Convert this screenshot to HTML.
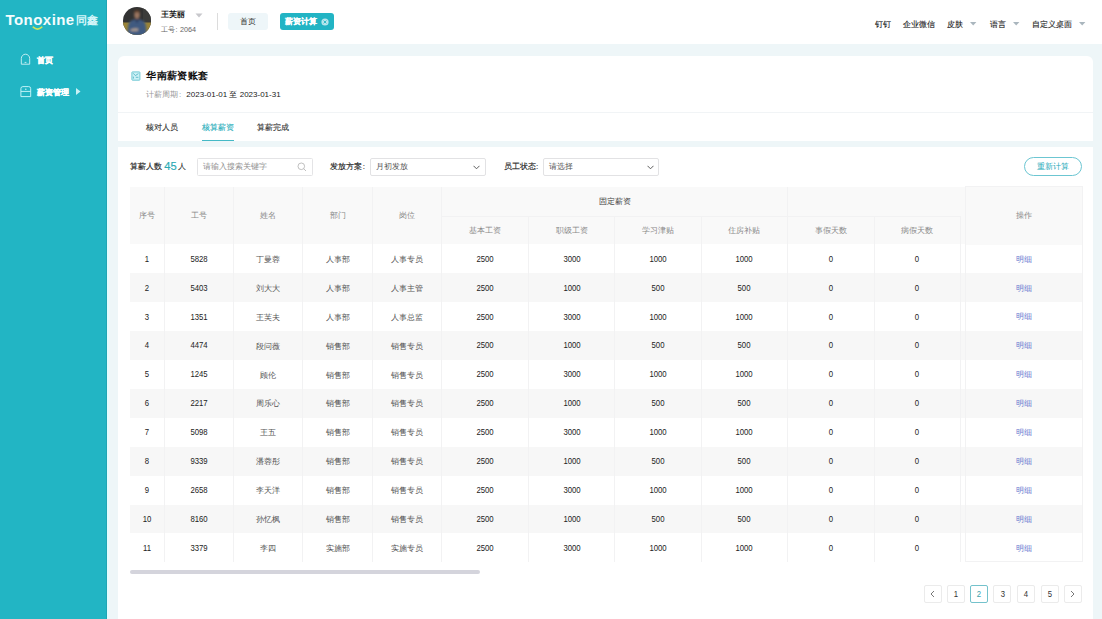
<!DOCTYPE html>
<html><head><meta charset="utf-8"><style>
*{box-sizing:border-box;margin:0;padding:0}
html,body{width:1102px;height:619px;overflow:hidden;background:#eef6f8;font-family:"Liberation Sans",sans-serif;color:#333}
.t{position:absolute;white-space:nowrap;line-height:1}
.b{position:absolute}
.c{position:absolute;white-space:nowrap;line-height:1;transform:translateX(-50%)}
.cell{font-size:8px;color:#333}
.hd{font-size:8px;color:#888}
</style></head><body>
<div class="b" style="left:0;top:0;width:107px;height:619px;background:#22b5c4"></div>
<div class="b" style="left:106px;top:0;width:1px;height:619px;background:#1fa6b4"></div>
<div class="b" style="left:107px;top:44px;width:1.5px;height:575px;background:#e2fcfe"></div>
<div class="t" style="left:5.5px;top:12.3px;font-size:15px;color:#f4fdfe;font-weight:bold;letter-spacing:0.45px">Tonoxine</div>
<div class="t" style="left:75.8px;top:14.5px;font-size:11.4px;color:#d4f5f9;font-weight:bold">同鑫</div>
<svg class="b" style="left:32px;top:26px" width="11" height="5" viewBox="0 0 11 5"><path d="M1.2 1.2 Q5.5 5 9.8 1.2" fill="none" stroke="#cde35a" stroke-width="1.6" stroke-linecap="round"/></svg>
<svg class="b" style="left:20px;top:53px" width="12" height="13" viewBox="0 0 12 13"><path d="M1.3 11.2 V5.6 A4.2 4.4 0 0 1 9.7 5.6 V11.2 Z" fill="none" stroke="#d2f3f6" stroke-width="0.9"/><path d="M4.6 9.4 H6.4" stroke="#d2f3f6" stroke-width="0.9"/></svg>
<div class="t" style="left:37px;top:56.8px;font-size:8.2px;color:#fff;font-weight:900;-webkit-text-stroke:0.3px #fff">首页</div>
<svg class="b" style="left:20px;top:85px" width="12" height="13" viewBox="0 0 12 13"><path d="M0.9 11.6 V3.6 Q0.9 1.6 2.9 1.6 H8.7 Q10.7 1.6 10.7 3.6 V11.6 Z" fill="none" stroke="#c8f6fa" stroke-width="0.95"/><path d="M0.9 6.4 H10.7" stroke="#c8f6fa" stroke-width="0.95" fill="none"/><circle cx="5.8" cy="4.3" r="0.75" fill="#c8f6fa"/></svg>
<div class="t" style="left:37px;top:88.6px;font-size:8.2px;color:#fff;font-weight:900;-webkit-text-stroke:0.3px #fff">薪资管理</div>
<svg class="b" style="left:76px;top:88px" width="5" height="7" viewBox="0 0 5 7"><path d="M0 0 L4.5 3.5 L0 7 Z" fill="#c9f1f5"/></svg>
<div class="b" style="left:107px;top:0;width:995px;height:44.4px;background:#fff"></div>
<svg class="b" style="left:123px;top:7px" width="28" height="28" viewBox="0 0 28 28"><defs><clipPath id="av"><circle cx="14" cy="14" r="14"/></clipPath><filter id="bl2" x="-50%" y="-50%" width="200%" height="200%"><feGaussianBlur stdDeviation="0.8"/></filter></defs><g clip-path="url(#av)"><rect width="28" height="28" fill="#323232"/><rect x="20" y="0" width="8" height="16" fill="#3c3c3a"/><rect x="0" y="15.5" width="28" height="12.5" fill="#9a8438"/><g filter="url(#bl2)"><path d="M4 29 L5.5 17 Q7 12.5 14 12 Q21 12.5 22.5 17 L24 29 Z" fill="#3f5a80"/><path d="M11 12 L14 16 L17 12 Z" fill="#2e4060"/><ellipse cx="14" cy="8" rx="2.8" ry="3.8" fill="#9a7560"/><path d="M10.8 6 Q11 2.8 14 2.8 Q17 2.8 17.2 6 Q14 4.5 10.8 6 Z" fill="#5a3e2c"/><path d="M7.5 22.5 Q11 20.5 15.5 21.5 L15 24 Q10.5 24.5 7.5 24 Z" fill="#a89a90"/><rect x="0" y="25" width="4" height="3" fill="#2a2a2a"/></g></g></svg>
<div class="t" style="left:161px;top:11.3px;font-size:8px;color:#1a1a1a;font-weight:bold">王芙丽</div>
<svg class="b" style="left:195px;top:13px" width="8" height="5" viewBox="0 0 8 5"><path d="M0.5 0.5 L7.5 0.5 L4 4.5 Z" fill="#c8c8cc"/></svg>
<div class="t" style="left:161px;top:25.5px;font-size:7.2px;color:#666">工号<span style="margin:0 2.5px 0 0.5px">:</span>2064</div>
<div class="b" style="left:217px;top:13px;width:1px;height:17px;background:#dcdcdc"></div>
<div class="b" style="left:228px;top:13px;width:40px;height:17px;background:#eef6f9;border-radius:3px"></div>
<div class="c" style="left:248px;top:17.9px;font-size:8px;color:#333">首页</div>
<div class="b" style="left:279.5px;top:13px;width:54.5px;height:17px;background:#22b4c4;border-radius:3px"></div>
<div class="t" style="left:285.3px;top:17.8px;font-size:8px;color:#fff;font-weight:bold;-webkit-text-stroke:0.15px #fff">薪资计算</div>
<svg class="b" style="left:320.8px;top:17.6px" width="8" height="8" viewBox="0 0 8 8"><circle cx="4" cy="4" r="3.6" fill="#b8e6ec"/><path d="M2.6 2.6 L5.4 5.4 M5.4 2.6 L2.6 5.4" stroke="#22b4c4" stroke-width="0.9"/></svg>
<div class="t" style="left:875.4px;top:21px;font-size:8px;color:#222;-webkit-text-stroke:0.12px currentColor">钉钉</div>
<div class="t" style="left:903.3px;top:21px;font-size:8px;color:#222;-webkit-text-stroke:0.12px currentColor">企业微信</div>
<div class="t" style="left:947.2px;top:21px;font-size:8px;color:#222;-webkit-text-stroke:0.12px currentColor">皮肤</div>
<svg class="b" style="left:969.6999999999999px;top:22.4px" width="7" height="4" viewBox="0 0 7 4"><path d="M0 0 L6.4 0 L3.2 3.6 Z" fill="#aab6be"/></svg>
<div class="t" style="left:989.6px;top:21px;font-size:8px;color:#222;-webkit-text-stroke:0.12px currentColor">语言</div>
<svg class="b" style="left:1012.6999999999999px;top:22.4px" width="7" height="4" viewBox="0 0 7 4"><path d="M0 0 L6.4 0 L3.2 3.6 Z" fill="#aab6be"/></svg>
<div class="t" style="left:1032.4px;top:21px;font-size:8px;color:#222;-webkit-text-stroke:0.12px currentColor">自定义桌面</div>
<svg class="b" style="left:1079.3px;top:22.4px" width="7" height="4" viewBox="0 0 7 4"><path d="M0 0 L6.4 0 L3.2 3.6 Z" fill="#aab6be"/></svg>
<div class="b" style="left:118px;top:56.2px;width:975px;height:84.6px;background:#fff;border-radius:6px 6px 0 0"></div>
<svg class="b" style="left:130.5px;top:70.5px" width="10" height="10" viewBox="0 0 10 10"><rect x="0.9" y="0.9" width="8" height="8.3" rx="0.6" fill="#cdf1f6" stroke="#6ac6d3" stroke-width="0.95"/><path d="M2.2 2.3 L4.4 4.6 L7.4 2.6 M2.4 5.6 V7.6 M4.8 6.3 H7.4" fill="none" stroke="#4fb3c3" stroke-width="0.85"/></svg>
<div class="t" style="left:146.3px;top:71px;font-size:10.45px;letter-spacing:0.35px;color:#111;font-weight:bold">华南薪资账套</div>
<div class="t" style="left:146.3px;top:90.5px;font-size:8px;color:#999">计薪周期<span style="margin:0 5px 0 0.8px">:</span><span style="color:#222;font-size:8px">2023-01-01 至 2023-01-31</span></div>
<div class="b" style="left:118px;top:111.5px;width:975px;height:1px;background:#f1f4f6"></div>
<div class="t" style="left:146.3px;top:124px;font-size:8px;color:#333;-webkit-text-stroke:0.12px currentColor">核对人员</div>
<div class="t" style="left:201.6px;top:124px;font-size:8px;color:#2aaebb;-webkit-text-stroke:0.12px currentColor">核算薪资</div>
<div class="b" style="left:201.6px;top:139.7px;width:32.4px;height:1.4px;background:#45b9c6"></div>
<div class="t" style="left:257.4px;top:124px;font-size:8px;color:#333;-webkit-text-stroke:0.12px currentColor">算薪完成</div>
<div class="b" style="left:118px;top:147px;width:975px;height:480px;background:#fff"></div>
<div class="t" style="left:130.4px;top:163.2px;font-size:8px;color:#222;-webkit-text-stroke:0.14px currentColor">算薪人数</div>
<div class="t" style="left:164.2px;top:161.2px;font-size:11.2px;color:#2aaab4;-webkit-text-stroke:0.15px currentColor">45</div>
<div class="t" style="left:178px;top:163.2px;font-size:8px;color:#222">人</div>
<div class="b" style="left:197.2px;top:158.3px;width:115.8px;height:17.5px;border:1px solid #e4e4e6;border-radius:1.5px"></div>
<div class="t" style="left:203px;top:162.8px;font-size:8px;color:#8f8f8f">请输入搜索关键字</div>
<svg class="b" style="left:297px;top:161.5px" width="10" height="10" viewBox="0 0 10 10"><circle cx="4.3" cy="4.3" r="3.3" fill="none" stroke="#b0b0b0" stroke-width="0.8"/><path d="M6.7 6.7 L9 9" stroke="#b0b0b0" stroke-width="0.8"/></svg>
<div class="t" style="left:330.2px;top:163.2px;font-size:8px;color:#222;-webkit-text-stroke:0.14px currentColor">发放方案<span style="margin-left:0.5px">:</span></div>
<div class="b" style="left:370.2px;top:158.3px;width:115.6px;height:17.5px;border:1px solid #e2e2e4;border-radius:2px"></div>
<div class="t" style="left:375.6px;top:162.8px;font-size:8px;color:#555">月初发放</div>
<svg class="b" style="left:472.5px;top:164.8px" width="7" height="5" viewBox="0 0 7 5"><path d="M0.5 0.8 L3.5 3.8 L6.5 0.8" fill="none" stroke="#555" stroke-width="0.95"/></svg>
<div class="t" style="left:503.5px;top:163.2px;font-size:8px;color:#222;-webkit-text-stroke:0.14px currentColor">员工状态<span style="margin-left:0.5px">:</span></div>
<div class="b" style="left:543.2px;top:158.3px;width:115.6px;height:17.5px;border:1px solid #e2e2e4;border-radius:2px"></div>
<div class="t" style="left:549.3px;top:162.8px;font-size:8px;color:#555">请选择</div>
<svg class="b" style="left:646.5px;top:164.8px" width="7" height="5" viewBox="0 0 7 5"><path d="M0.5 0.8 L3.5 3.8 L6.5 0.8" fill="none" stroke="#555" stroke-width="0.95"/></svg>
<div class="b" style="left:1024px;top:157px;width:58px;height:19px;border:1px solid #6cc6d2;border-radius:10px"></div>
<div class="c" style="left:1053px;top:162.5px;font-size:8px;color:#22a8b8">重新计算</div>
<div class="b" style="left:130px;top:186.8px;width:952.5999999999999px;height:57.69999999999999px;background:#f9f9f9"></div>
<div class="b" style="left:130px;top:245.2px;width:952.5999999999999px;height:28.19px;background:#fff"></div>
<div class="b" style="left:130px;top:273.39px;width:952.5999999999999px;height:28.89px;background:#f7f7f7"></div>
<div class="b" style="left:130px;top:302.28px;width:952.5999999999999px;height:28.89px;background:#fff"></div>
<div class="b" style="left:130px;top:331.17px;width:952.5999999999999px;height:28.89px;background:#f7f7f7"></div>
<div class="b" style="left:130px;top:360.06px;width:952.5999999999999px;height:28.89px;background:#fff"></div>
<div class="b" style="left:130px;top:388.95px;width:952.5999999999999px;height:28.89px;background:#f7f7f7"></div>
<div class="b" style="left:130px;top:417.84000000000003px;width:952.5999999999999px;height:28.89px;background:#fff"></div>
<div class="b" style="left:130px;top:446.73px;width:952.5999999999999px;height:28.89px;background:#f7f7f7"></div>
<div class="b" style="left:130px;top:475.62px;width:952.5999999999999px;height:28.89px;background:#fff"></div>
<div class="b" style="left:130px;top:504.51px;width:952.5999999999999px;height:28.89px;background:#f7f7f7"></div>
<div class="b" style="left:130px;top:533.4px;width:952.5999999999999px;height:28.600000000000023px;background:#fff"></div>
<div class="b" style="left:164.2px;top:186.8px;width:1px;height:375.2px;background:#f2f2f3"></div>
<div class="b" style="left:233.1px;top:186.8px;width:1px;height:375.2px;background:#f2f2f3"></div>
<div class="b" style="left:302.2px;top:186.8px;width:1px;height:375.2px;background:#f2f2f3"></div>
<div class="b" style="left:372.0px;top:186.8px;width:1px;height:375.2px;background:#f2f2f3"></div>
<div class="b" style="left:441.2px;top:186.8px;width:1px;height:375.2px;background:#f2f2f3"></div>
<div class="b" style="left:527.9px;top:216.3px;width:1px;height:345.7px;background:#f2f2f3"></div>
<div class="b" style="left:614.3px;top:216.3px;width:1px;height:345.7px;background:#f2f2f3"></div>
<div class="b" style="left:701.0px;top:216.3px;width:1px;height:345.7px;background:#f2f2f3"></div>
<div class="b" style="left:786.8px;top:186.8px;width:1px;height:375.2px;background:#f2f2f3"></div>
<div class="b" style="left:873.7px;top:216.3px;width:1px;height:345.7px;background:#f2f2f3"></div>
<div class="b" style="left:960.2px;top:216.3px;width:1px;height:345.7px;background:#f2f2f3"></div>
<div class="b" style="left:441.7px;top:215.8px;width:519.0px;height:1px;background:#f2f2f3"></div>
<div class="c hd" style="left:147.35px;top:211.65px">序号</div>
<div class="c hd" style="left:199.14999999999998px;top:211.65px">工号</div>
<div class="c hd" style="left:268.15px;top:211.65px">姓名</div>
<div class="c hd" style="left:337.6px;top:211.65px">部门</div>
<div class="c hd" style="left:407.1px;top:211.65px">岗位</div>
<div class="c hd" style="left:614.5px;top:197.55px;color:#3a3a3a">固定薪资</div>
<div class="c hd" style="left:485.04999999999995px;top:227.20000000000002px">基本工资</div>
<div class="c hd" style="left:571.5999999999999px;top:227.20000000000002px">职级工资</div>
<div class="c hd" style="left:658.15px;top:227.20000000000002px">学习津贴</div>
<div class="c hd" style="left:744.4px;top:227.20000000000002px">住房补贴</div>
<div class="c hd" style="left:830.75px;top:227.20000000000002px">事假天数</div>
<div class="c hd" style="left:917.45px;top:227.20000000000002px">病假天数</div>
<div class="c cell" style="left:147.35px;top:254.745px;color:#222;font-size:8.8px;transform:translateX(-50%) scaleX(0.88)">1</div>
<div class="c cell" style="left:199.14999999999998px;top:254.745px;color:#222;font-size:8.8px;transform:translateX(-50%) scaleX(0.88)">5828</div>
<div class="c cell" style="left:268.15px;top:255.945px;color:#555">丁曼蓉</div>
<div class="c cell" style="left:337.6px;top:255.945px;color:#555">人事部</div>
<div class="c cell" style="left:407.1px;top:255.945px;color:#555">人事专员</div>
<div class="c cell" style="left:485.04999999999995px;top:254.745px;color:#222;font-size:8.8px;transform:translateX(-50%) scaleX(0.88)">2500</div>
<div class="c cell" style="left:571.5999999999999px;top:254.745px;color:#222;font-size:8.8px;transform:translateX(-50%) scaleX(0.88)">3000</div>
<div class="c cell" style="left:658.15px;top:254.745px;color:#222;font-size:8.8px;transform:translateX(-50%) scaleX(0.88)">1000</div>
<div class="c cell" style="left:744.4px;top:254.745px;color:#222;font-size:8.8px;transform:translateX(-50%) scaleX(0.88)">1000</div>
<div class="c cell" style="left:830.75px;top:254.745px;color:#222;font-size:8.8px;transform:translateX(-50%) scaleX(0.88)">0</div>
<div class="c cell" style="left:917.45px;top:254.745px;color:#222;font-size:8.8px;transform:translateX(-50%) scaleX(0.88)">0</div>
<div class="c cell" style="left:147.35px;top:283.63499999999993px;color:#222;font-size:8.8px;transform:translateX(-50%) scaleX(0.88)">2</div>
<div class="c cell" style="left:199.14999999999998px;top:283.63499999999993px;color:#222;font-size:8.8px;transform:translateX(-50%) scaleX(0.88)">5403</div>
<div class="c cell" style="left:268.15px;top:284.835px;color:#555">刘大大</div>
<div class="c cell" style="left:337.6px;top:284.835px;color:#555">人事部</div>
<div class="c cell" style="left:407.1px;top:284.835px;color:#555">人事主管</div>
<div class="c cell" style="left:485.04999999999995px;top:283.63499999999993px;color:#222;font-size:8.8px;transform:translateX(-50%) scaleX(0.88)">2500</div>
<div class="c cell" style="left:571.5999999999999px;top:283.63499999999993px;color:#222;font-size:8.8px;transform:translateX(-50%) scaleX(0.88)">1000</div>
<div class="c cell" style="left:658.15px;top:283.63499999999993px;color:#222;font-size:8.8px;transform:translateX(-50%) scaleX(0.88)">500</div>
<div class="c cell" style="left:744.4px;top:283.63499999999993px;color:#222;font-size:8.8px;transform:translateX(-50%) scaleX(0.88)">500</div>
<div class="c cell" style="left:830.75px;top:283.63499999999993px;color:#222;font-size:8.8px;transform:translateX(-50%) scaleX(0.88)">0</div>
<div class="c cell" style="left:917.45px;top:283.63499999999993px;color:#222;font-size:8.8px;transform:translateX(-50%) scaleX(0.88)">0</div>
<div class="c cell" style="left:147.35px;top:312.5249999999999px;color:#222;font-size:8.8px;transform:translateX(-50%) scaleX(0.88)">3</div>
<div class="c cell" style="left:199.14999999999998px;top:312.5249999999999px;color:#222;font-size:8.8px;transform:translateX(-50%) scaleX(0.88)">1351</div>
<div class="c cell" style="left:268.15px;top:313.72499999999997px;color:#555">王芙夫</div>
<div class="c cell" style="left:337.6px;top:313.72499999999997px;color:#555">人事部</div>
<div class="c cell" style="left:407.1px;top:313.72499999999997px;color:#555">人事总监</div>
<div class="c cell" style="left:485.04999999999995px;top:312.5249999999999px;color:#222;font-size:8.8px;transform:translateX(-50%) scaleX(0.88)">2500</div>
<div class="c cell" style="left:571.5999999999999px;top:312.5249999999999px;color:#222;font-size:8.8px;transform:translateX(-50%) scaleX(0.88)">3000</div>
<div class="c cell" style="left:658.15px;top:312.5249999999999px;color:#222;font-size:8.8px;transform:translateX(-50%) scaleX(0.88)">1000</div>
<div class="c cell" style="left:744.4px;top:312.5249999999999px;color:#222;font-size:8.8px;transform:translateX(-50%) scaleX(0.88)">1000</div>
<div class="c cell" style="left:830.75px;top:312.5249999999999px;color:#222;font-size:8.8px;transform:translateX(-50%) scaleX(0.88)">0</div>
<div class="c cell" style="left:917.45px;top:312.5249999999999px;color:#222;font-size:8.8px;transform:translateX(-50%) scaleX(0.88)">0</div>
<div class="c cell" style="left:147.35px;top:341.41499999999996px;color:#222;font-size:8.8px;transform:translateX(-50%) scaleX(0.88)">4</div>
<div class="c cell" style="left:199.14999999999998px;top:341.41499999999996px;color:#222;font-size:8.8px;transform:translateX(-50%) scaleX(0.88)">4474</div>
<div class="c cell" style="left:268.15px;top:342.615px;color:#555">段问薇</div>
<div class="c cell" style="left:337.6px;top:342.615px;color:#555">销售部</div>
<div class="c cell" style="left:407.1px;top:342.615px;color:#555">销售专员</div>
<div class="c cell" style="left:485.04999999999995px;top:341.41499999999996px;color:#222;font-size:8.8px;transform:translateX(-50%) scaleX(0.88)">2500</div>
<div class="c cell" style="left:571.5999999999999px;top:341.41499999999996px;color:#222;font-size:8.8px;transform:translateX(-50%) scaleX(0.88)">1000</div>
<div class="c cell" style="left:658.15px;top:341.41499999999996px;color:#222;font-size:8.8px;transform:translateX(-50%) scaleX(0.88)">500</div>
<div class="c cell" style="left:744.4px;top:341.41499999999996px;color:#222;font-size:8.8px;transform:translateX(-50%) scaleX(0.88)">500</div>
<div class="c cell" style="left:830.75px;top:341.41499999999996px;color:#222;font-size:8.8px;transform:translateX(-50%) scaleX(0.88)">0</div>
<div class="c cell" style="left:917.45px;top:341.41499999999996px;color:#222;font-size:8.8px;transform:translateX(-50%) scaleX(0.88)">0</div>
<div class="c cell" style="left:147.35px;top:370.30499999999995px;color:#222;font-size:8.8px;transform:translateX(-50%) scaleX(0.88)">5</div>
<div class="c cell" style="left:199.14999999999998px;top:370.30499999999995px;color:#222;font-size:8.8px;transform:translateX(-50%) scaleX(0.88)">1245</div>
<div class="c cell" style="left:268.15px;top:371.505px;color:#555">顾伦</div>
<div class="c cell" style="left:337.6px;top:371.505px;color:#555">销售部</div>
<div class="c cell" style="left:407.1px;top:371.505px;color:#555">销售专员</div>
<div class="c cell" style="left:485.04999999999995px;top:370.30499999999995px;color:#222;font-size:8.8px;transform:translateX(-50%) scaleX(0.88)">2500</div>
<div class="c cell" style="left:571.5999999999999px;top:370.30499999999995px;color:#222;font-size:8.8px;transform:translateX(-50%) scaleX(0.88)">3000</div>
<div class="c cell" style="left:658.15px;top:370.30499999999995px;color:#222;font-size:8.8px;transform:translateX(-50%) scaleX(0.88)">1000</div>
<div class="c cell" style="left:744.4px;top:370.30499999999995px;color:#222;font-size:8.8px;transform:translateX(-50%) scaleX(0.88)">1000</div>
<div class="c cell" style="left:830.75px;top:370.30499999999995px;color:#222;font-size:8.8px;transform:translateX(-50%) scaleX(0.88)">0</div>
<div class="c cell" style="left:917.45px;top:370.30499999999995px;color:#222;font-size:8.8px;transform:translateX(-50%) scaleX(0.88)">0</div>
<div class="c cell" style="left:147.35px;top:399.19499999999994px;color:#222;font-size:8.8px;transform:translateX(-50%) scaleX(0.88)">6</div>
<div class="c cell" style="left:199.14999999999998px;top:399.19499999999994px;color:#222;font-size:8.8px;transform:translateX(-50%) scaleX(0.88)">2217</div>
<div class="c cell" style="left:268.15px;top:400.395px;color:#555">周乐心</div>
<div class="c cell" style="left:337.6px;top:400.395px;color:#555">销售部</div>
<div class="c cell" style="left:407.1px;top:400.395px;color:#555">销售专员</div>
<div class="c cell" style="left:485.04999999999995px;top:399.19499999999994px;color:#222;font-size:8.8px;transform:translateX(-50%) scaleX(0.88)">2500</div>
<div class="c cell" style="left:571.5999999999999px;top:399.19499999999994px;color:#222;font-size:8.8px;transform:translateX(-50%) scaleX(0.88)">1000</div>
<div class="c cell" style="left:658.15px;top:399.19499999999994px;color:#222;font-size:8.8px;transform:translateX(-50%) scaleX(0.88)">500</div>
<div class="c cell" style="left:744.4px;top:399.19499999999994px;color:#222;font-size:8.8px;transform:translateX(-50%) scaleX(0.88)">500</div>
<div class="c cell" style="left:830.75px;top:399.19499999999994px;color:#222;font-size:8.8px;transform:translateX(-50%) scaleX(0.88)">0</div>
<div class="c cell" style="left:917.45px;top:399.19499999999994px;color:#222;font-size:8.8px;transform:translateX(-50%) scaleX(0.88)">0</div>
<div class="c cell" style="left:147.35px;top:428.085px;color:#222;font-size:8.8px;transform:translateX(-50%) scaleX(0.88)">7</div>
<div class="c cell" style="left:199.14999999999998px;top:428.085px;color:#222;font-size:8.8px;transform:translateX(-50%) scaleX(0.88)">5098</div>
<div class="c cell" style="left:268.15px;top:429.285px;color:#555">王五</div>
<div class="c cell" style="left:337.6px;top:429.285px;color:#555">销售部</div>
<div class="c cell" style="left:407.1px;top:429.285px;color:#555">销售专员</div>
<div class="c cell" style="left:485.04999999999995px;top:428.085px;color:#222;font-size:8.8px;transform:translateX(-50%) scaleX(0.88)">2500</div>
<div class="c cell" style="left:571.5999999999999px;top:428.085px;color:#222;font-size:8.8px;transform:translateX(-50%) scaleX(0.88)">3000</div>
<div class="c cell" style="left:658.15px;top:428.085px;color:#222;font-size:8.8px;transform:translateX(-50%) scaleX(0.88)">1000</div>
<div class="c cell" style="left:744.4px;top:428.085px;color:#222;font-size:8.8px;transform:translateX(-50%) scaleX(0.88)">1000</div>
<div class="c cell" style="left:830.75px;top:428.085px;color:#222;font-size:8.8px;transform:translateX(-50%) scaleX(0.88)">0</div>
<div class="c cell" style="left:917.45px;top:428.085px;color:#222;font-size:8.8px;transform:translateX(-50%) scaleX(0.88)">0</div>
<div class="c cell" style="left:147.35px;top:456.97499999999997px;color:#222;font-size:8.8px;transform:translateX(-50%) scaleX(0.88)">8</div>
<div class="c cell" style="left:199.14999999999998px;top:456.97499999999997px;color:#222;font-size:8.8px;transform:translateX(-50%) scaleX(0.88)">9339</div>
<div class="c cell" style="left:268.15px;top:458.175px;color:#555">潘蓉彤</div>
<div class="c cell" style="left:337.6px;top:458.175px;color:#555">销售部</div>
<div class="c cell" style="left:407.1px;top:458.175px;color:#555">销售专员</div>
<div class="c cell" style="left:485.04999999999995px;top:456.97499999999997px;color:#222;font-size:8.8px;transform:translateX(-50%) scaleX(0.88)">2500</div>
<div class="c cell" style="left:571.5999999999999px;top:456.97499999999997px;color:#222;font-size:8.8px;transform:translateX(-50%) scaleX(0.88)">1000</div>
<div class="c cell" style="left:658.15px;top:456.97499999999997px;color:#222;font-size:8.8px;transform:translateX(-50%) scaleX(0.88)">500</div>
<div class="c cell" style="left:744.4px;top:456.97499999999997px;color:#222;font-size:8.8px;transform:translateX(-50%) scaleX(0.88)">500</div>
<div class="c cell" style="left:830.75px;top:456.97499999999997px;color:#222;font-size:8.8px;transform:translateX(-50%) scaleX(0.88)">0</div>
<div class="c cell" style="left:917.45px;top:456.97499999999997px;color:#222;font-size:8.8px;transform:translateX(-50%) scaleX(0.88)">0</div>
<div class="c cell" style="left:147.35px;top:485.86499999999995px;color:#222;font-size:8.8px;transform:translateX(-50%) scaleX(0.88)">9</div>
<div class="c cell" style="left:199.14999999999998px;top:485.86499999999995px;color:#222;font-size:8.8px;transform:translateX(-50%) scaleX(0.88)">2658</div>
<div class="c cell" style="left:268.15px;top:487.065px;color:#555">李天洋</div>
<div class="c cell" style="left:337.6px;top:487.065px;color:#555">销售部</div>
<div class="c cell" style="left:407.1px;top:487.065px;color:#555">销售专员</div>
<div class="c cell" style="left:485.04999999999995px;top:485.86499999999995px;color:#222;font-size:8.8px;transform:translateX(-50%) scaleX(0.88)">2500</div>
<div class="c cell" style="left:571.5999999999999px;top:485.86499999999995px;color:#222;font-size:8.8px;transform:translateX(-50%) scaleX(0.88)">3000</div>
<div class="c cell" style="left:658.15px;top:485.86499999999995px;color:#222;font-size:8.8px;transform:translateX(-50%) scaleX(0.88)">1000</div>
<div class="c cell" style="left:744.4px;top:485.86499999999995px;color:#222;font-size:8.8px;transform:translateX(-50%) scaleX(0.88)">1000</div>
<div class="c cell" style="left:830.75px;top:485.86499999999995px;color:#222;font-size:8.8px;transform:translateX(-50%) scaleX(0.88)">0</div>
<div class="c cell" style="left:917.45px;top:485.86499999999995px;color:#222;font-size:8.8px;transform:translateX(-50%) scaleX(0.88)">0</div>
<div class="c cell" style="left:147.35px;top:514.755px;color:#222;font-size:8.8px;transform:translateX(-50%) scaleX(0.88)">10</div>
<div class="c cell" style="left:199.14999999999998px;top:514.755px;color:#222;font-size:8.8px;transform:translateX(-50%) scaleX(0.88)">8160</div>
<div class="c cell" style="left:268.15px;top:515.955px;color:#555">孙忆枫</div>
<div class="c cell" style="left:337.6px;top:515.955px;color:#555">销售部</div>
<div class="c cell" style="left:407.1px;top:515.955px;color:#555">销售专员</div>
<div class="c cell" style="left:485.04999999999995px;top:514.755px;color:#222;font-size:8.8px;transform:translateX(-50%) scaleX(0.88)">2500</div>
<div class="c cell" style="left:571.5999999999999px;top:514.755px;color:#222;font-size:8.8px;transform:translateX(-50%) scaleX(0.88)">1000</div>
<div class="c cell" style="left:658.15px;top:514.755px;color:#222;font-size:8.8px;transform:translateX(-50%) scaleX(0.88)">500</div>
<div class="c cell" style="left:744.4px;top:514.755px;color:#222;font-size:8.8px;transform:translateX(-50%) scaleX(0.88)">500</div>
<div class="c cell" style="left:830.75px;top:514.755px;color:#222;font-size:8.8px;transform:translateX(-50%) scaleX(0.88)">0</div>
<div class="c cell" style="left:917.45px;top:514.755px;color:#222;font-size:8.8px;transform:translateX(-50%) scaleX(0.88)">0</div>
<div class="c cell" style="left:147.35px;top:543.645px;color:#222;font-size:8.8px;transform:translateX(-50%) scaleX(0.88)">11</div>
<div class="c cell" style="left:199.14999999999998px;top:543.645px;color:#222;font-size:8.8px;transform:translateX(-50%) scaleX(0.88)">3379</div>
<div class="c cell" style="left:268.15px;top:544.845px;color:#555">李四</div>
<div class="c cell" style="left:337.6px;top:544.845px;color:#555">实施部</div>
<div class="c cell" style="left:407.1px;top:544.845px;color:#555">实施专员</div>
<div class="c cell" style="left:485.04999999999995px;top:543.645px;color:#222;font-size:8.8px;transform:translateX(-50%) scaleX(0.88)">2500</div>
<div class="c cell" style="left:571.5999999999999px;top:543.645px;color:#222;font-size:8.8px;transform:translateX(-50%) scaleX(0.88)">3000</div>
<div class="c cell" style="left:658.15px;top:543.645px;color:#222;font-size:8.8px;transform:translateX(-50%) scaleX(0.88)">1000</div>
<div class="c cell" style="left:744.4px;top:543.645px;color:#222;font-size:8.8px;transform:translateX(-50%) scaleX(0.88)">1000</div>
<div class="c cell" style="left:830.75px;top:543.645px;color:#222;font-size:8.8px;transform:translateX(-50%) scaleX(0.88)">0</div>
<div class="c cell" style="left:917.45px;top:543.645px;color:#222;font-size:8.8px;transform:translateX(-50%) scaleX(0.88)">0</div>
<div class="b" style="left:964.9px;top:186.3px;width:118.19999999999993px;height:376.2px;border:1px solid #f2f2f3;background:#fff"></div>
<div class="b" style="left:965.9px;top:187.3px;width:116.19999999999993px;height:57.89999999999999px;background:#f9f9f9"></div>
<div class="b" style="left:965.9px;top:245.2px;width:116.19999999999993px;height:28.19px;background:#fff"></div>
<div class="c" style="left:1024.0px;top:255.64499999999998px;font-size:8px;color:#6a7bd0">明细</div>
<div class="b" style="left:965.9px;top:273.39px;width:116.19999999999993px;height:28.89px;background:#f7f7f7"></div>
<div class="c" style="left:1024.0px;top:284.53499999999997px;font-size:8px;color:#6a7bd0">明细</div>
<div class="b" style="left:965.9px;top:302.28px;width:116.19999999999993px;height:28.89px;background:#fff"></div>
<div class="c" style="left:1024.0px;top:313.42499999999995px;font-size:8px;color:#6a7bd0">明细</div>
<div class="b" style="left:965.9px;top:331.17px;width:116.19999999999993px;height:28.89px;background:#f7f7f7"></div>
<div class="c" style="left:1024.0px;top:342.315px;font-size:8px;color:#6a7bd0">明细</div>
<div class="b" style="left:965.9px;top:360.06px;width:116.19999999999993px;height:28.89px;background:#fff"></div>
<div class="c" style="left:1024.0px;top:371.205px;font-size:8px;color:#6a7bd0">明细</div>
<div class="b" style="left:965.9px;top:388.95px;width:116.19999999999993px;height:28.89px;background:#f7f7f7"></div>
<div class="c" style="left:1024.0px;top:400.09499999999997px;font-size:8px;color:#6a7bd0">明细</div>
<div class="b" style="left:965.9px;top:417.84000000000003px;width:116.19999999999993px;height:28.89px;background:#fff"></div>
<div class="c" style="left:1024.0px;top:428.985px;font-size:8px;color:#6a7bd0">明细</div>
<div class="b" style="left:965.9px;top:446.73px;width:116.19999999999993px;height:28.89px;background:#f7f7f7"></div>
<div class="c" style="left:1024.0px;top:457.875px;font-size:8px;color:#6a7bd0">明细</div>
<div class="b" style="left:965.9px;top:475.62px;width:116.19999999999993px;height:28.89px;background:#fff"></div>
<div class="c" style="left:1024.0px;top:486.765px;font-size:8px;color:#6a7bd0">明细</div>
<div class="b" style="left:965.9px;top:504.51px;width:116.19999999999993px;height:28.89px;background:#f7f7f7"></div>
<div class="c" style="left:1024.0px;top:515.6550000000001px;font-size:8px;color:#6a7bd0">明细</div>
<div class="b" style="left:965.9px;top:533.4px;width:116.19999999999993px;height:28.100000000000023px;background:#fff"></div>
<div class="c" style="left:1024.0px;top:544.5450000000001px;font-size:8px;color:#6a7bd0">明细</div>
<div class="c hd" style="left:1024.0px;top:211.65px">操作</div>
<div class="b" style="left:130px;top:570px;width:349.5px;height:3.6px;background:#d4d4dc;border-radius:2px"></div>
<div class="b" style="left:923.6px;top:585px;width:18px;height:18px;border:1px solid #ebebeb;border-radius:2px"></div>
<svg class="b" style="left:930.1px;top:590px" width="5" height="8" viewBox="0 0 5 8"><path d="M4 1 L1 4 L4 7" fill="none" stroke="#555" stroke-width="0.8"/></svg>
<div class="b" style="left:946.7px;top:585px;width:18px;height:18px;border:1px solid #ebebeb;border-radius:2px"></div>
<div class="c" style="left:955.9000000000001px;top:590.3px;font-size:8.8px;color:#333;transform:translateX(-50%) scaleX(0.88)">1</div>
<div class="b" style="left:970.0px;top:585px;width:18px;height:18px;border:1px solid #74c2cc;border-radius:2px"></div>
<div class="c" style="left:979.2px;top:590.3px;font-size:8.8px;color:#3a9eac;transform:translateX(-50%) scaleX(0.88)">2</div>
<div class="b" style="left:993.4px;top:585px;width:18px;height:18px;border:1px solid #ebebeb;border-radius:2px"></div>
<div class="c" style="left:1002.6px;top:590.3px;font-size:8.8px;color:#333;transform:translateX(-50%) scaleX(0.88)">3</div>
<div class="b" style="left:1017.0px;top:585px;width:18px;height:18px;border:1px solid #ebebeb;border-radius:2px"></div>
<div class="c" style="left:1026.2px;top:590.3px;font-size:8.8px;color:#333;transform:translateX(-50%) scaleX(0.88)">4</div>
<div class="b" style="left:1040.5px;top:585px;width:18px;height:18px;border:1px solid #ebebeb;border-radius:2px"></div>
<div class="c" style="left:1049.7px;top:590.3px;font-size:8.8px;color:#333;transform:translateX(-50%) scaleX(0.88)">5</div>
<div class="b" style="left:1063.8px;top:585px;width:18px;height:18px;border:1px solid #ebebeb;border-radius:2px"></div>
<svg class="b" style="left:1070.3px;top:590px" width="5" height="8" viewBox="0 0 5 8"><path d="M1 1 L4 4 L1 7" fill="none" stroke="#555" stroke-width="0.8"/></svg>
</body></html>
